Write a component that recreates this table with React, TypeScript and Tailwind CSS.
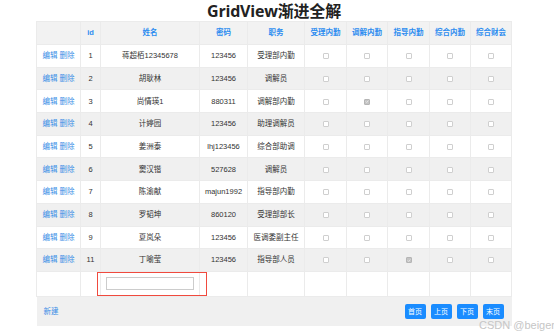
import React from 'react'

type Row = {
  id: number
  name: string
  pwd: string
  job: string
  checks: boolean[]
}

const rows: Row[] = [
  { id: 1, name: '蒋超栢12345678', pwd: '123456', job: '受理部内勤', checks: [false, false, false, false, false] },
  { id: 2, name: '胡耿林', pwd: '123456', job: '调解员', checks: [false, false, false, false, false] },
  { id: 3, name: '尚情瑛1', pwd: '880311', job: '调解部内勤', checks: [false, true, false, false, false] },
  { id: 4, name: '计婷园', pwd: '123456', job: '助理调解员', checks: [false, false, false, false, false] },
  { id: 5, name: '姜洲泰', pwd: 'lhj123456', job: '综合部助调', checks: [false, false, false, false, false] },
  { id: 6, name: '窦汉锴', pwd: '527628', job: '调解员', checks: [false, false, false, false, false] },
  { id: 7, name: '陈渝献', pwd: 'majun1992', job: '指导部内勤', checks: [false, false, false, false, false] },
  { id: 8, name: '罗韬坤', pwd: '860120', job: '受理部部长', checks: [false, false, false, false, false] },
  { id: 9, name: '夏岚朵', pwd: '123456', job: '医调委副主任', checks: [false, false, false, false, false] },
  { id: 11, name: '丁喻莹', pwd: '123456', job: '指导部人员', checks: [false, false, true, false, false] },
]

const headers = ['受理内勤', '调解内勤', '指导内勤', '综合内勤', '综合财会']

function Box({ checked }: { checked: boolean }) {
  if (checked) {
    return (
      <span className="inline-flex w-[6px] h-[6px] items-center justify-center rounded-[1px] bg-[#c4c4c4] border border-[#b5b5b5] align-middle">
        <svg width="5" height="5" viewBox="0 0 6 6">
          <path d="M1 3 L2.5 4.5 L5 1.5" stroke="#f4f4f4" strokeWidth="1" fill="none" />
        </svg>
      </span>
    )
  }
  return <span className="inline-block w-[6px] h-[6px] rounded-[1px] bg-white border border-[#cfcfcf] align-middle" />
}

const cell = 'border border-[#ebebeb] text-center p-0'

export default function App() {
  return (
    <div
      className="relative w-[554px] h-[336px] bg-white overflow-hidden text-[#333]"
      style={{ fontFamily: '"Liberation Sans", "Noto Sans CJK SC", sans-serif' }}
    >
      <h1
        className="h-[21px] pt-[1px] pr-[6px] text-center text-[16px] leading-[20px] font-bold text-[#222] tracking-[-0.2px]"
        style={{ fontFamily: '"Open Sans", "Noto Sans CJK SC", sans-serif' }}
      >
        GridView渐进全解
      </h1>

      <table className="ml-[36px] w-[475px] table-fixed border-collapse text-[7.5px]">
        <colgroup>
          <col className="w-[44px]" />
          <col className="w-[20px]" />
          <col className="w-[99px]" />
          <col className="w-[48px]" />
          <col className="w-[57px]" />
          <col className="w-[42px]" />
          <col className="w-[41px]" />
          <col className="w-[42px]" />
          <col className="w-[41px]" />
          <col className="w-[41px]" />
        </colgroup>
        <thead>
          <tr className="h-[23px] bg-[#f2f2f2] text-[#2b8cf0] font-bold">
            <th className={cell}></th>
            <th className={cell}>id</th>
            <th className={cell}>姓名</th>
            <th className={cell}>密码</th>
            <th className={cell}>职务</th>
            {headers.map((h) => (
              <th key={h} className={cell}>{h}</th>
            ))}
          </tr>
        </thead>
        <tbody>
          {rows.map((r, i) => (
            <tr key={r.id} className={i % 2 === 0 ? 'h-[22.7px] bg-white' : 'h-[22.7px] bg-[#f0f0f0]'}>
              <td className={cell + ' text-[#3a8ee6]'}>编辑 删除</td>
              <td className={cell}>{r.id}</td>
              <td className={cell}>{r.name}</td>
              <td className={cell}>{r.pwd}</td>
              <td className={cell}>{r.job}</td>
              {r.checks.map((c, j) => (
                <td key={j} className={cell}>
                  <Box checked={c} />
                </td>
              ))}
            </tr>
          ))}
          <tr className="h-[25px] bg-white">
            <td className={cell}></td>
            <td className={cell}></td>
            <td className={cell}>
              <input className="block mx-auto w-[88px] h-[13px] border border-[#cccccc] bg-white" />
            </td>
            <td className={cell}></td>
            <td className={cell}></td>
            <td className={cell}></td>
            <td className={cell}></td>
            <td className={cell}></td>
            <td className={cell}></td>
            <td className={cell}></td>
          </tr>
          <tr className="h-[30px] bg-[#f0f0f0]">
            <td colSpan={10} className="p-0">
              <div className="flex items-center justify-between pl-[7px] pr-[8px]">
                <span className="text-[#3a8ee6]">新建</span>
                <div className="flex gap-[5px]">
                  {['首页', '上页', '下页', '末页'].map((b) => (
                    <button
                      key={b}
                      className="w-[21px] h-[15px] rounded-[2px] bg-[#1a8cff] text-white text-[7px] leading-[15px]"
                    >
                      {b}
                    </button>
                  ))}
                </div>
              </div>
            </td>
          </tr>
        </tbody>
      </table>

      {/* annotation box */}
      <div className="absolute left-[97px] top-[272px] w-[110px] h-[24px] border border-[#f04a3e]" />

      <div className="absolute left-[479px] top-[318px] whitespace-nowrap text-[11px] leading-[14px] text-[#c6c6c6]">
        CSDN @beiger
      </div>
    </div>
  )
}
